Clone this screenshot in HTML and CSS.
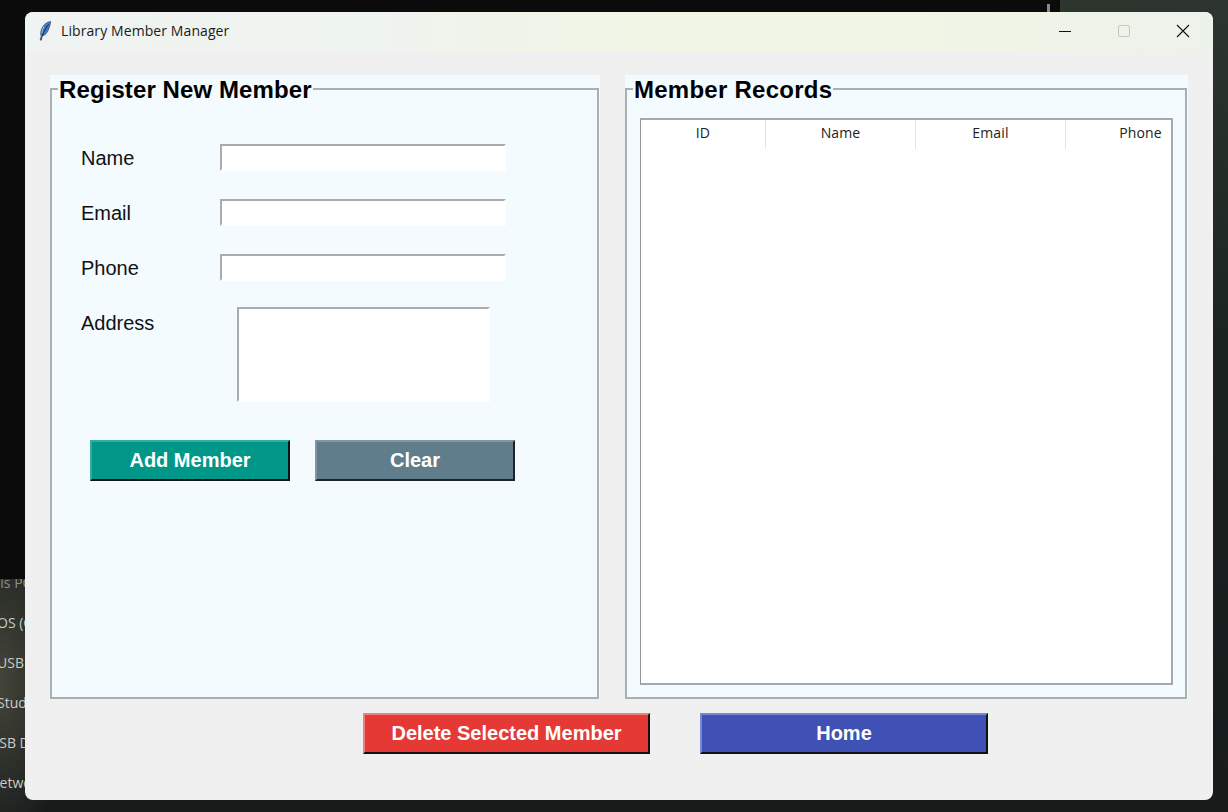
FILE: index.html
```html
<!DOCTYPE html>
<html lang="en">
<head>
  <meta charset="UTF-8">
  <title>Library Member Manager</title>
  <link rel="stylesheet" href="styles.css">
</head>
<body>

  <!-- desktop icons showing behind the window -->
  <div class="desk-labels">
    <span class="desk-label label-1">This PC</span>
    <span class="desk-label label-2">OS (C:)</span>
    <span class="desk-label label-3">USB Drive</span>
    <span class="desk-label label-4">Studio</span>
    <span class="desk-label label-5">USB Drive</span>
    <span class="desk-label label-6">Network</span>
  </div>
  <div class="desk-dark"></div>
  <div class="desk-mark"></div>

  <div class="window">
    <div class="titlebar">
      <svg class="feather" width="14" height="20" viewBox="0 0 14 20">
        <path d="M12.500 .5C8 1.200 4.200 5 3 10c-.5 2.200-.3 3.600.2 4.800l-1 4.200 1.200.2 .9-4.200c2.600-.5 5-3.200 6.200-6.500C11.500 6 12.600 3 12.500 .5z" fill="#3f7cc9" stroke="#1c2c44" stroke-width=".6"/>
        <path d="M6 5.500C4.800 7.500 4 10 4 12.500" fill="none" stroke="#9cc4ec" stroke-width="1"/>
        <path d="M10.500 3.500C8 6.500 6 10 4.300 14.500" fill="none" stroke="#0d1a2e" stroke-width=".9"/>
      </svg>
      <span class="title-text">Library Member Manager</span>
      <div class="win-controls">
        <svg width="14" height="14" viewBox="0 0 14 14"><path d="M1 7.500H13" stroke="#111" stroke-width="1"/></svg>
        <svg width="14" height="14" viewBox="0 0 14 14"><rect x="1.500" y="1.500" width="11" height="11" rx="1.500" fill="none" stroke="#c4c8c4"/></svg>
        <svg width="14" height="14" viewBox="0 0 14 14"><path d="M1 1L13 13M13 1L1 13" stroke="#111" stroke-width="1.100"/></svg>
      </div>
    </div>

    <div class="content">
      <div class="panels">
        <div class="panel panel-left">
          <fieldset class="group">
            <legend>Register New Member</legend>
            <div class="form-row">
              <label>Name</label>
              <input type="text" class="entry">
            </div>
            <div class="form-row">
              <label>Email</label>
              <input type="text" class="entry">
            </div>
            <div class="form-row">
              <label>Phone</label>
              <input type="text" class="entry">
            </div>
            <div class="form-row address-row">
              <label>Address</label>
              <textarea class="entry address"></textarea>
            </div>
            <div class="form-buttons">
              <button class="tk-btn btn-add">Add Member</button>
              <button class="tk-btn btn-clear">Clear</button>
            </div>
          </fieldset>
        </div>

        <div class="panel panel-right">
          <fieldset class="group">
            <legend>Member Records</legend>
            <div class="tree">
              <div class="tree-head">
                <div class="col col-id">ID</div>
                <div class="col">Name</div>
                <div class="col">Email</div>
                <div class="col">Phone</div>
              </div>
            </div>
          </fieldset>
        </div>
      </div>

      <div class="bottom-buttons">
        <button class="tk-btn btn-delete">Delete Selected Member</button>
        <button class="tk-btn btn-home">Home</button>
      </div>
    </div>
  </div>

</body>
</html>
```

FILE: styles.css
```css
* { margin: 0; padding: 0; box-sizing: border-box; }
html, body { height: 100%; }
body {
  position: relative;
  overflow: hidden;
  font-family: "Liberation Sans", Arial, sans-serif;
  background:
    radial-gradient(ellipse 70px 170px at 0 680px, #45453a, transparent),
    linear-gradient(180deg, #2d352f 0, #1b2321 45%, #171c1b 100%);
}

/* desktop */
.desk-dark {
  position: absolute;
  top: 0;
  left: 0;
  width: 1060px;
  height: 579px;
  background: #0b0b0b;
}
.desk-mark {
  position: absolute;
  top: 4px;
  left: 1047px;
  width: 3px;
  height: 8px;
  background: #8a8a8a;
}
.desk-labels { position: absolute; top: 0; left: 0; }
.desk-label {
  position: absolute;
  font-family: "Open Sans", sans-serif;
  font-size: 14px;
  line-height: 18px;
  color: #c9cbc5;
  white-space: nowrap;
}
.label-1 { top: 574px; left: -16px; color: #8f918c; }
.label-2 { top: 614px; left: -3px; }
.label-3 { top: 654px; left: -3px; }
.label-4 { top: 694px; left: -3px; }
.label-5 { top: 734px; left: -11px; }
.label-6 { top: 774px; left: -11px; }

/* window */
.window {
  position: absolute;
  left: 25px;
  top: 12px;
  width: 1188px;
  height: 788px;
  display: flex;
  flex-direction: column;
  overflow: hidden;
  background: #f0f0f0;
  border-radius: 8px;
}
.titlebar {
  height: 39px;
  display: flex;
  align-items: center;
  padding-left: 13px;
  padding-bottom: 2px;
  background: linear-gradient(90deg, #eff3f2 0, #eef4ee 30%, #f1f5e4 55%, #f1f5e4 70%, #edf3ec 100%);
}
.feather { flex-shrink: 0; }
.title-text {
  margin-left: 9px;
  font-family: "Open Sans", sans-serif;
  font-size: 14px;
  letter-spacing: .09px;
  color: #1a1a1a;
}
.win-controls {
  margin-left: auto;
  display: flex;
  gap: 45px;
  padding-right: 23px;
}

.content { flex: 1; padding: 24px 25px 0 25px; }
.panels { display: flex; gap: 25px; }
.panel { background: #f3fbff; height: 624px; }
.panel-left { width: 550px; }
.panel-right { width: 563px; }

.group {
  height: 624px;
  border: 2px solid #a9b0b3;
}
.panel-left .group { width: 549px; }
.panel-right .group { width: 562px; }
.group legend {
  margin-left: 6px;
  padding: 2px 1px 0;
  font-size: 24px;
  line-height: 26px;
  letter-spacing: .1px;
  font-weight: bold;
  color: #000;
}
.panel-right legend { letter-spacing: .25px; }

/* form */
.form-row {
  display: flex;
  align-items: center;
  height: 27px;
  margin-top: 28px;
  padding-left: 29px;
}
.form-row:first-of-type { margin-top: 41px; }
.form-row label {
  width: 139px;
  padding-top: 2px;
  font-size: 20px;
  color: #111;
}
.entry {
  width: 286px;
  height: 27px;
  border: 2px solid #fff;
  border-top-color: #ababab;
  border-left-color: #ababab;
  border-radius: 0;
  outline: none;
  background: #fff;
  resize: none;
}
.address-row { align-items: flex-start; height: 95px; margin-top: 26px; }
.address-row label { padding-top: 5px; width: 156px; }
.address { width: 253px; height: 95px; display: block; }

.form-buttons {
  display: flex;
  gap: 25px;
  margin-top: 38px;
  padding-left: 38px;
}
.tk-btn {
  width: 200px;
  height: 41px;
  border: 2px solid;
  font-family: "Liberation Sans", Arial, sans-serif;
  font-size: 20px;
  font-weight: bold;
  color: #fff;
}
.btn-add { background: #009688; border-color: #33ab9f #111 #111 #33ab9f; }
.btn-clear { background: #607d8b; border-color: #8097a2 #222 #222 #8097a2; }
.btn-delete { background: #e53935; border-color: #ef7f7c #111 #111 #ef7f7c; }
.btn-home { background: #3f51b5; border-color: #7986d8 #111 #111 #7986d8; }

/* records table */
.tree {
  width: 533px;
  height: 567px;
  margin: 15px 0 0 13px;
  border: 2px solid #a3a9ad;
  border-left: 1px solid #8f969a;
  background: #fff;
  overflow: hidden;
}
.tree-head { display: flex; height: 30px; }
.col {
  flex: 0 0 150px;
  height: 29px;
  line-height: 26px;
  text-align: center;
  font-family: "Open Sans", sans-serif;
  font-size: 14px;
  letter-spacing: .15px;
  color: #222;
  border-right: 1px solid #e3e3e3;
}
.col-id { flex-basis: 125px; }

.bottom-buttons {
  display: flex;
  gap: 50px;
  margin-top: 14px;
  padding-left: 313px;
}
.bottom-buttons .tk-btn { width: 287px; }
.bottom-buttons .btn-home { width: 288px; }
```
